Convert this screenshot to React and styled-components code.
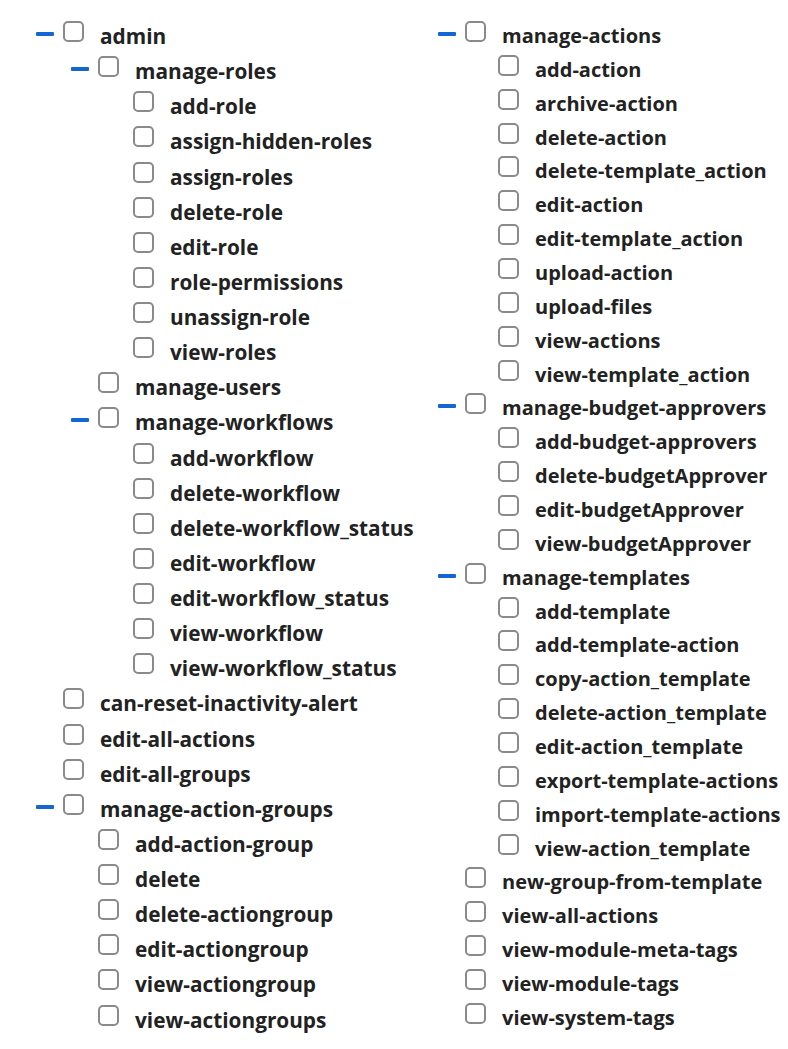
import React from 'react';
import styled, { createGlobalStyle } from 'styled-components';

const GlobalStyle = createGlobalStyle`
  html, body {
    margin: 0;
    padding: 0;
    background: #ffffff;
  }
  body {
    font-family: "Open Sans", Lato, Arial, sans-serif;
    color: #222222;
    overflow: hidden;
  }
`;

const leftTree = [
  {
    label: 'admin',
    children: [
      {
        label: 'manage-roles',
        children: [
          { label: 'add-role' },
          { label: 'assign-hidden-roles' },
          { label: 'assign-roles' },
          { label: 'delete-role' },
          { label: 'edit-role' },
          { label: 'role-permissions' },
          { label: 'unassign-role' },
          { label: 'view-roles' },
        ],
      },
      { label: 'manage-users' },
      {
        label: 'manage-workflows',
        children: [
          { label: 'add-workflow' },
          { label: 'delete-workflow' },
          { label: 'delete-workflow_status' },
          { label: 'edit-workflow' },
          { label: 'edit-workflow_status' },
          { label: 'view-workflow' },
          { label: 'view-workflow_status' },
        ],
      },
    ],
  },
  { label: 'can-reset-inactivity-alert' },
  { label: 'edit-all-actions' },
  { label: 'edit-all-groups' },
  {
    label: 'manage-action-groups',
    children: [
      { label: 'add-action-group' },
      { label: 'delete' },
      { label: 'delete-actiongroup' },
      { label: 'edit-actiongroup' },
      { label: 'view-actiongroup' },
      { label: 'view-actiongroups' },
    ],
  },
];

const rightTree = [
  {
    label: 'manage-actions',
    children: [
      { label: 'add-action' },
      { label: 'archive-action' },
      { label: 'delete-action' },
      { label: 'delete-template_action' },
      { label: 'edit-action' },
      { label: 'edit-template_action' },
      { label: 'upload-action' },
      { label: 'upload-files' },
      { label: 'view-actions' },
      { label: 'view-template_action' },
    ],
  },
  {
    label: 'manage-budget-approvers',
    children: [
      { label: 'add-budget-approvers' },
      { label: 'delete-budgetApprover' },
      { label: 'edit-budgetApprover' },
      { label: 'view-budgetApprover' },
    ],
  },
  {
    label: 'manage-templates',
    children: [
      { label: 'add-template' },
      { label: 'add-template-action' },
      { label: 'copy-action_template' },
      { label: 'delete-action_template' },
      { label: 'edit-action_template' },
      { label: 'export-template-actions' },
      { label: 'import-template-actions' },
      { label: 'view-action_template' },
    ],
  },
  { label: 'new-group-from-template' },
  { label: 'view-all-actions' },
  { label: 'view-module-meta-tags' },
  { label: 'view-module-tags' },
  { label: 'view-system-tags' },
];

// the two panels were captured at slightly different zoom levels
const leftSize = { rowHeight: 35.14, indent: 35, fontSize: 20.8 };
const rightSize = { rowHeight: 33.86, indent: 33, fontSize: 20 };

const Page = styled.div`
  display: grid;
  grid-template-columns: 402px 1fr;
  padding: 19px 0 0 36px;
  height: 1030px;
  overflow: hidden;
`;

const TreeList = styled.ul`
  list-style: none;
  margin: 0;
  padding: 0 0 0 ${p => p.$indent}px;
`;

const TreeItem = styled.li`
  margin: 0;
  padding: 0;
`;

const Row = styled.div`
  display: flex;
  align-items: flex-start;
  height: ${p => p.$rowHeight}px;
`;

const ToggleSlot = styled.span`
  flex: 0 0 27px;
  height: 100%;
  display: flex;
  align-items: flex-start;
`;

const Minus = styled.span`
  display: block;
  width: 18px;
  height: 4px;
  margin-top: 13px;
  background: #1466d2;
  border-radius: 1px;
`;

const Checkbox = styled.span`
  flex: 0 0 auto;
  box-sizing: border-box;
  width: 21px;
  height: 21px;
  margin-top: 2px;
  margin-right: 16px;
  border: 2px solid #8a8a8a;
  border-radius: 5px;
  background: #ffffff;
`;

const Label = styled.span`
  font-size: ${p => p.$fontSize}px;
  font-weight: 700;
  line-height: ${p => p.$rowHeight}px;
  white-space: nowrap;
  color: #222222;
`;

const TreeNode = ({ node, size }) => (
  <TreeItem>
    <Row $rowHeight={size.rowHeight}>
      <ToggleSlot>{node.children && <Minus />}</ToggleSlot>
      <Checkbox />
      <Label $rowHeight={size.rowHeight} $fontSize={size.fontSize}>
        {node.label}
      </Label>
    </Row>
    {node.children && (
      <TreeList $indent={size.indent}>
        {node.children.map(child => (
          <TreeNode key={child.label} node={child} size={size} />
        ))}
      </TreeList>
    )}
  </TreeItem>
);

const Tree = ({ nodes, size }) => (
  <TreeList $indent={0}>
    {nodes.map(node => (
      <TreeNode key={node.label} node={node} size={size} />
    ))}
  </TreeList>
);

export default function App() {
  return (
    <>
      <GlobalStyle />
      <Page>
        <Tree nodes={leftTree} size={leftSize} />
        <Tree nodes={rightTree} size={rightSize} />
      </Page>
    </>
  );
}
